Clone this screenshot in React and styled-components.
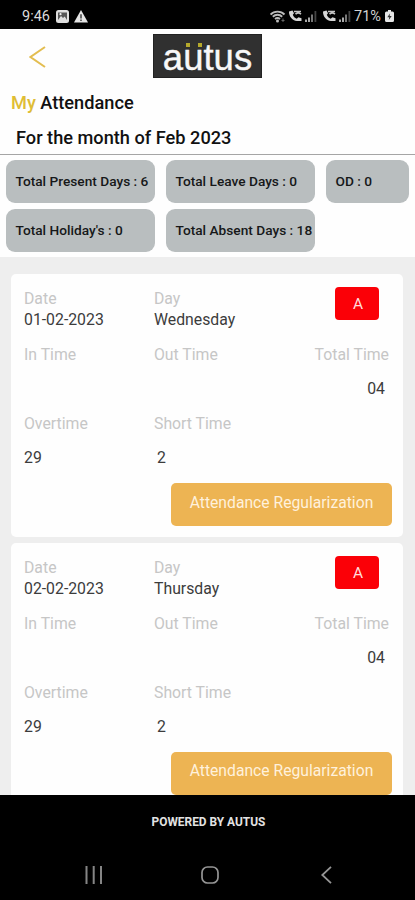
import React from "react";
import styled, { createGlobalStyle } from "styled-components";

const chips = [
  "Total Present Days : 6",
  "Total Leave Days : 0",
  "OD : 0",
  "Total Holiday's : 0",
  "Total Absent Days : 18",
];

const records = [
  { date: "01-02-2023", day: "Wednesday", total: "04", over: "29", short: "2" },
  { date: "02-02-2023", day: "Thursday", total: "04", over: "29", short: "2" },
];

const CallIcon = () => (
  <svg width="15" height="14" viewBox="0 0 15 14" fill="none">
    <path
      d="M1 2.500C.8 7 4 11.800 9 12h4.500V9.300l-3-1-1.800 1.400C6.800 9 5.400 7.500 4.800 5.700L6 4.300 4.500 1.500z"
      fill="#d6d6d6"
    />
    <path d="M6 2.500h7M7.500 5.200c1.600-1.500 3.800-1.500 5.500 0" stroke="#c4c4c4" strokeWidth="1.700" />
  </svg>
);

const SignalIcon = () => (
  <svg width="12" height="12" viewBox="0 0 12 12">
    <path d="M0 9.500h2V12H0zM3 7.500h2V12H3z" fill="#aaa" />
    <path d="M6 4.500h2V12H6z" fill="#777" />
    <path d="M9.500 1h1.800v11H9.500z" fill="#444" />
  </svg>
);

const App = () => {
  return (
    <>
      <GlobalStyle />
      <Screen>
        <StatusBar>
          <Clock>9:46</Clock>
          <svg width="13" height="13" viewBox="0 0 13 13">
            <rect width="13" height="13" rx="2.500" fill="#dedede" />
            <rect x="2" y="2.500" width="9" height="7.500" fill="#555" />
            <path d="M2 10 5 6l2 2 1.700-1.500L11 10z" fill="#ddd" />
            <circle cx="4.500" cy="4.200" r="1.100" fill="#eee" />
          </svg>
          <Warning width="14" height="13" viewBox="0 0 14 13">
            <path d="M7 0 14 12.500H0z" fill="#e4e4e4" />
            <path d="M7 4.200v4.300M7 9.500v1.500" stroke="#333" strokeWidth="1.400" />
          </Warning>
          <StatusIcons>
            <svg width="16" height="13" viewBox="0 0 16 13" fill="none">
              <path
                d="M.5 4.500C4.100.6 10.900.6 14.500 4.500M2.800 6.700c2.700-2.600 6.700-2.600 9.400 0M5 9c1.500-1.200 3.500-1.200 5 0"
                stroke="#bbb"
                strokeWidth="1.900"
              />
              <circle cx="7.500" cy="11" r="1.500" fill="#bbb" />
              <path d="M13 8.500V12M11.500 10.500h3" stroke="#666" />
            </svg>
            <CallIcon />
            <SignalIcon />
            <Spacer />
            <CallIcon />
            <SignalIcon />
          </StatusIcons>
          <Percent>71%</Percent>
          <svg width="9" height="12" viewBox="0 0 9 12">
            <path d="M3 0h3v1.500h1.500Q9 1.500 9 3v7.500Q9 12 7.500 12h-6Q0 12 0 10.500V3q0-1.500 1.500-1.500H3z" fill="#e6e6e6" />
            <path d="M4.900 3.500 2.300 7.200h1.900l-.4 2.800 2.900-3.900H4.700z" fill="#333" />
          </svg>
        </StatusBar>
        <Header>
          <BackButton>
            <svg width="17" height="22" viewBox="0 0 17 22" fill="none">
              <path d="M16 1 1.500 11 16 21" stroke="#e3bd50" strokeWidth="2" />
            </svg>
          </BackButton>
          <Logo>
            a<Umlaut>u</Umlaut>tus
          </Logo>
        </Header>
        <Title>
          <Accent>My</Accent> Attendance
        </Title>
        <Month>For the month of Feb 2023</Month>
        <Chips>
          {chips.map((text) => (
            <Chip key={text}>{text}</Chip>
          ))}
        </Chips>
        <List>
          {records.map((r) => (
            <Card key={r.date}>
              <DayRow>
                <div>
                  <Label>Date</Label>
                  <Value>{r.date}</Value>
                </div>
                <div>
                  <Label>Day</Label>
                  <Value>{r.day}</Value>
                </div>
                <Badge>A</Badge>
              </DayRow>
              <TimeRow>
                <Label>In Time</Label>
                <Label>Out Time</Label>
                <TotalCell>
                  <Label>Total Time</Label>
                  <Total>{r.total}</Total>
                </TotalCell>
              </TimeRow>
              <ExtraRow>
                <div>
                  <Label>Overtime</Label>
                  <Amount>{r.over}</Amount>
                </div>
                <div>
                  <Label>Short Time</Label>
                  <Amount $indent>{r.short}</Amount>
                </div>
              </ExtraRow>
              <Regularize>Attendance Regularization</Regularize>
            </Card>
          ))}
        </List>
        <Footer>POWERED BY AUTUS</Footer>
        <NavBar>
          <svg width="18" height="18" viewBox="0 0 18 18">
            <path d="M1.500 0v18M8.700 0v18M16 0v18" stroke="#858585" strokeWidth="2" />
          </svg>
          <svg width="18" height="18" viewBox="0 0 18 18" fill="none">
            <rect x="1" y="1" width="16" height="16" rx="5.500" stroke="#959595" strokeWidth="1.700" />
          </svg>
          <svg width="11" height="18" viewBox="0 0 11 18" fill="none">
            <path d="M10 .8 1.300 9 10 17.200" stroke="#959595" strokeWidth="1.800" />
          </svg>
        </NavBar>
      </Screen>
    </>
  );
};

const GlobalStyle = createGlobalStyle`
  body {
    margin: 0;
  }
  * {
    box-sizing: border-box;
  }
`;
const Screen = styled.div`
  width: 100%;
  height: 900px;
  display: flex;
  flex-direction: column;
  overflow: hidden;
  background: #fefefe;
  font-family: Roboto, sans-serif;
`;
const StatusBar = styled.div`
  flex: none;
  height: 29px;
  padding: 3px 21px 0 22px;
  display: flex;
  align-items: center;
  background: #000;
`;
const Clock = styled.span`
  width: 34px;
  color: #dcdcdc;
  font-size: 14.5px;
`;
const Warning = styled.svg`
  margin-left: 5px;
`;
const StatusIcons = styled.div`
  margin-left: auto;
  display: flex;
  align-items: center;
  gap: 2px;
`;
const Spacer = styled.span`
  width: 1px;
`;
const Percent = styled.span`
  width: 30px;
  margin-left: 3px;
  margin-right: 1px;
  color: #d2d2d2;
  font-size: 14.5px;
  white-space: nowrap;
`;
const Header = styled.header`
  flex: none;
  height: 60px;
  padding: 5px 0 0 29px;
  display: flex;
  align-items: flex-start;
`;
const BackButton = styled.button`
  width: 124px;
  padding: 12px 0 0;
  border: 0;
  background: none;
  text-align: left;
  line-height: 0;
`;
const Logo = styled.div`
  width: 109px;
  height: 44px;
  background: #303030;
  color: #f8f8f8;
  font-family: "Liberation Sans", sans-serif;
  font-size: 36.5px;
  line-height: 46px;
  text-align: center;
  border: 1px solid #222;
  -webkit-text-stroke: 0.4px #f8f8f8;
`;
const Umlaut = styled.span`
  position: relative;
  &::before,
  &::after {
    content: "";
    position: absolute;
    top: 6px;
    left: 3px;
    width: 4px;
    height: 4px;
    background: #b5a92c;
  }
  &::after {
    left: 15px;
  }
`;
const Title = styled.h1`
  flex: none;
  margin: 0 0 0 11px;
  height: 26px;
  line-height: 27px;
  font-size: 18.2px;
  font-weight: 500;
  color: #111;
`;
const Accent = styled.span`
  color: #dfbd35;
`;
const Month = styled.h2`
  flex: none;
  margin: 0;
  padding: 9px 0 0 16px;
  height: 40px;
  line-height: 27px;
  font-size: 18.2px;
  font-weight: 500;
  color: #111;
  border-bottom: 1.5px solid #a5a5a5;
`;
const Chips = styled.div`
  flex: none;
  height: 102px;
  padding: 5px 6px 0;
  display: grid;
  grid-template-columns: 149px 149px 83px;
  grid-auto-rows: 43px;
  column-gap: 11px;
  row-gap: 6px;
`;
const Chip = styled.div`
  padding-left: 9.5px;
  border-radius: 9px;
  background: #b9bebf;
  color: #161819;
  font-size: 13.7px;
  font-weight: 500;
  line-height: 43px;
  white-space: nowrap;
`;
const List = styled.main`
  flex: 1;
  min-height: 0;
  overflow: hidden;
  padding: 17px 12px 0 11px;
  background: #eee;
`;
const Card = styled.section`
  height: 262.5px;
  margin-bottom: 6px;
  padding: 13px 11px 0 13px;
  display: flex;
  flex-direction: column;
  border-radius: 5px;
  background: #fefefe;
`;
const DayRow = styled.div`
  height: 56px;
  display: grid;
  grid-template-columns: 130px 1fr auto;
`;
const TimeRow = styled(DayRow)`
  height: 69px;
`;
const ExtraRow = styled(DayRow)`
  height: 71px;
`;
const Label = styled.div`
  color: #c6c6c6;
  font-size: 15.8px;
  line-height: 24px;
  height: 22px;
`;
const Value = styled.div`
  color: #3c3c3c;
  font-size: 15.8px;
  line-height: 22px;
  height: 22px;
`;
const TotalCell = styled.div`
  padding-right: 3px;
  text-align: right;
`;
const Total = styled(Value)`
  margin-top: 13px;
  padding-right: 4px;
`;
const Amount = styled(Value)`
  margin-top: 13px;
  padding-left: ${(props) => (props.$indent ? "3px" : "0")};
`;
const Badge = styled.div`
  width: 44px;
  height: 33px;
  margin-right: 13px;
  padding-left: 2px;
  border-radius: 4px;
  background: #fb0007;
  color: #ffdcdc;
  font-size: 15.5px;
  line-height: 35px;
  text-align: center;
`;
const Regularize = styled.button`
  align-self: flex-end;
  flex: none;
  width: 221px;
  height: 43px;
  padding: 0 0 5px;
  border: 0;
  border-radius: 5px;
  background: #edb453;
  color: #fff1dc;
  font-family: inherit;
  font-size: 15.7px;
  white-space: nowrap;
`;
const Footer = styled.footer`
  flex: none;
  height: 55px;
  padding: 1px 0 0 2px;
  background: #000;
  color: #e2e2e2;
  font-size: 11.9px;
  font-weight: 700;
  line-height: 52px;
  text-align: center;
`;
const NavBar = styled.nav`
  flex: none;
  height: 50px;
  padding-left: 85px;
  display: flex;
  align-items: center;
  gap: 98px;
  background: #000;

  svg:last-child {
    margin-left: 4px;
  }
`;

export default App;
